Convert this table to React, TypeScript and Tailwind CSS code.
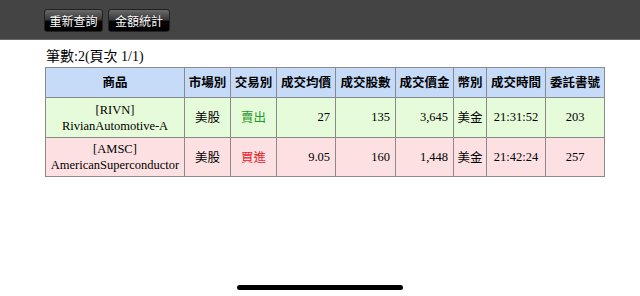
import React from "react";

const serif = { fontFamily: '"Liberation Serif", "Noto Sans CJK TC", serif' };

const cols = [139, 46, 46, 59, 60, 58, 33, 59, 59];
const headers = ["商品", "市場別", "交易別", "成交均價", "成交股數", "成交價金", "幣別", "成交時間", "委託書號"];

type Row = {
  sym: string;
  name: string;
  side: string;
  sell: boolean;
  price: string;
  qty: string;
  amt: string;
  time: string;
  no: string;
};

const rows: Row[] = [
  { sym: "[RIVN]", name: "RivianAutomotive-A", side: "賣出", sell: true, price: "27", qty: "135", amt: "3,645", time: "21:31:52", no: "203" },
  { sym: "[AMSC]", name: "AmericanSuperconductor", side: "買進", sell: false, price: "9.05", qty: "160", amt: "1,448", time: "21:42:24", no: "257" },
];

function Btn({ label, w }: { label: string; w: string }) {
  return (
    <button
      className={`${w} h-[23px] rounded-[3px] border border-[#222] bg-[linear-gradient(to_bottom,#6a6a6a_0%,#3a3a3a_45%,#050505_55%,#000_100%)] text-[12px] leading-none text-white [text-shadow:0_1px_1px_#000]`}
      style={{ fontFamily: '"Noto Sans CJK TC", sans-serif' }}
    >
      {label}
    </button>
  );
}

export default function App() {
  return (
    <div className="w-[640px] h-[296px] bg-white relative overflow-hidden" style={serif}>
      <div className="h-[40px] bg-[#444444] border-b border-[#6a6a6a] flex items-start gap-[5px] pl-[44px] pt-[9px]">
        <Btn label="重新查詢" w="w-[59px]" />
        <Btn label="金額統計" w="w-[62px]" />
      </div>
      <div className="pl-[46px] pt-[8px] text-[14px] leading-[17px] text-black">筆數:2(頁次 1/1)</div>
      <div className="pl-[45px] pt-[2px]">
        <table className="border-collapse border border-[#8a8a8a] text-[12.5px] text-black" style={{ width: 559, tableLayout: "fixed" }}>
          <colgroup>
            {cols.map((c, i) => (
              <col key={i} style={{ width: c }} />
            ))}
          </colgroup>
          <thead>
            <tr className="h-[30px] bg-[#c6dbf8]">
              {headers.map((h) => (
                <th
                  key={h}
                  className="border border-[#8a8a8a] font-bold text-center p-0 text-[12.5px]"
                  style={{ fontFamily: '"Noto Sans CJK TC", sans-serif' }}
                >
                  {h}
                </th>
              ))}
            </tr>
          </thead>
          <tbody>
            {rows.map((r) => {
              const bg = r.sell ? "bg-[#e6fbd9]" : "bg-[#fde1e2]";
              const cjk = { fontFamily: '"Noto Sans CJK TC", sans-serif' };
              return (
                <tr key={r.no} className={`${r.sell ? "h-[40px]" : "h-[39px]"} ${bg}`}>
                  <td className="border border-[#8a8a8a] text-center leading-[16px] p-0">
                    {r.sym}
                    <br />
                    {r.name}
                  </td>
                  <td className="border border-[#8a8a8a] text-center p-0" style={cjk}>美股</td>
                  <td
                    className={`border border-[#8a8a8a] text-center p-0 ${r.sell ? "text-[#1f9a2a]" : "text-[#e8202a]"}`}
                    style={cjk}
                  >
                    {r.side}
                  </td>
                  <td className="border border-[#8a8a8a] text-right pr-[5px] p-0">{r.price}</td>
                  <td className="border border-[#8a8a8a] text-right pr-[5px] p-0">{r.qty}</td>
                  <td className="border border-[#8a8a8a] text-right pr-[5px] p-0">{r.amt}</td>
                  <td className="border border-[#8a8a8a] text-center p-0" style={cjk}>美金</td>
                  <td className="border border-[#8a8a8a] text-center p-0">{r.time}</td>
                  <td className="border border-[#8a8a8a] text-center p-0">{r.no}</td>
                </tr>
              );
            })}
          </tbody>
        </table>
      </div>
      <div className="absolute left-[237px] top-[285px] w-[166px] h-[5px] rounded-full bg-black" />
    </div>
  );
}
